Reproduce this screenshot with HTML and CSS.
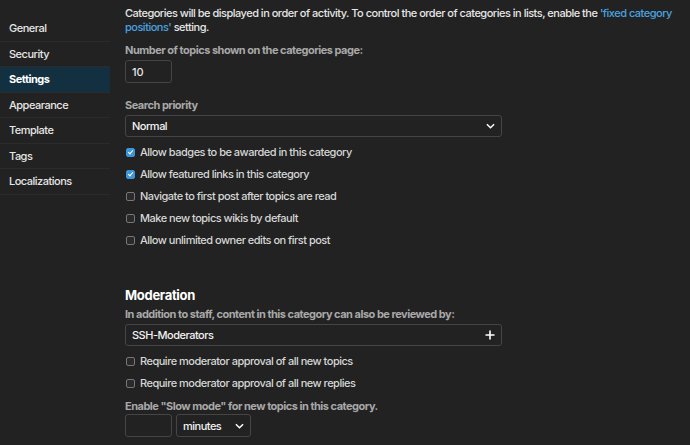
FILE: index.html
```html
<!DOCTYPE html>
<html lang="en">
<head>
  <meta charset="UTF-8" />
  <title>Category Settings</title>
  <link rel="stylesheet" href="styles.css">
</head>
<body>
  <div class="page">
    <ul class="nav">
      <li>General</li>
      <li>Security</li>
      <li class="active">Settings</li>
      <li>Appearance</li>
      <li>Template</li>
      <li>Tags</li>
      <li>Localizations</li>
    </ul>

    <div class="main">
      <p class="intro">Categories will be displayed in order of activity. To control the order of categories in lists, enable the <a href="#">'fixed category positions'</a> setting.</p>

      <div class="field">
        <label class="label">Number of topics shown on the categories page:</label>
        <input class="input small" type="text" value="10">
      </div>

      <div class="field spaced">
        <label class="label">Search priority</label>
        <div class="select wide">
          <span>Normal</span>
          <svg class="chevron" viewBox="0 0 10 6"><path d="M1 1l4 4 4-4" /></svg>
        </div>
      </div>

      <div class="checks">
        <label class="check"><span class="box on"></span>Allow badges to be awarded in this category</label>
        <label class="check"><span class="box on"></span>Allow featured links in this category</label>
        <label class="check"><span class="box"></span>Navigate to first post after topics are read</label>
        <label class="check"><span class="box"></span>Make new topics wikis by default</label>
        <label class="check"><span class="box"></span>Allow unlimited owner edits on first post</label>
      </div>

      <h3 class="section">Moderation</h3>
      <div class="field">
        <label class="label">In addition to staff, content in this category can also be reviewed by:</label>
        <div class="select wide">
          <span>SSH-Moderators</span>
          <svg class="plus" viewBox="0 0 10 10"><path d="M5 0.5v9M0.5 5h9" /></svg>
        </div>
      </div>

      <div class="checks last">
        <label class="check"><span class="box"></span>Require moderator approval of all new topics</label>
        <label class="check"><span class="box"></span>Require moderator approval of all new replies</label>
      </div>

      <div class="field">
        <label class="label tight">Enable "Slow mode" for new topics in this category.</label>
        <div class="row">
          <input class="input small" type="text" value="">
          <div class="select unit">
            <span>minutes</span>
            <svg class="chevron" viewBox="0 0 10 6"><path d="M1 1l4 4 4-4" /></svg>
          </div>
        </div>
      </div>
    </div>
  </div>
</body>
</html>
```

FILE: styles.css
```css
body {
  font-family: Inter, "Noto Sans", sans-serif;
  background: #222222;
  color: #e6e6e6;
  margin: 0;
  padding: 0;
  font-size: 11px;
  font-weight: 500;
  letter-spacing: -0.5px;
}
.page {
  display: flex;
  align-items: flex-start;
}
.nav {
  list-style: none;
  margin: 0;
  padding: 16px 0 0;
  width: 110px;
  flex-shrink: 0;
}
.nav li {
  height: 24.5px;
  line-height: 24.5px;
  padding-left: 9px;
  border-bottom: 1px solid #2b2b2b;
  color: #e6e6e6;
}
.nav li.active {
  background: #12303f;
  color: #ffffff;
  font-weight: 700;
}
.main {
  padding: 6px 12px 0 15px;
  flex: 1;
}
.intro {
  margin: 0 0 9px;
  line-height: 14px;
}
.intro a {
  color: #4aa3e0;
  text-decoration: none;
}
.field {
  margin-bottom: 4px;
}
.field.spaced {
  margin-top: 15px;
}
.label {
  display: block;
  font-weight: 700;
  color: #a8a8a8;
  line-height: 14px;
  margin-bottom: 3px;
}
.label.tight {
  margin-bottom: 1px;
}
.input {
  box-sizing: border-box;
  height: 23px;
  background: #222222;
  border: 1px solid #454545;
  border-radius: 3px;
  color: #e6e6e6;
  font: inherit;
  padding: 0 6px;
  outline: none;
}
.input.small {
  width: 47px;
}
.select {
  box-sizing: border-box;
  height: 22px;
  border: 1px solid #454545;
  border-radius: 3px;
  display: flex;
  align-items: center;
  justify-content: space-between;
  padding: 0 6px;
  color: #f2f2f2;
}
.select.wide {
  width: 377px;
}
.select.unit {
  width: 75px;
  height: 23px;
  padding-left: 6px;
}
.chevron {
  width: 9px;
  height: 6px;
  fill: none;
  stroke: #ffffff;
  stroke-width: 1.6;
}
.plus {
  width: 10px;
  height: 10px;
  stroke: #ffffff;
  stroke-width: 1.6;
}
.row {
  display: flex;
  gap: 4px;
}
.checks {
  display: flex;
  flex-direction: column;
}
.checks.last {
  margin: 1px 0 5px;
}
.check {
  display: flex;
  align-items: center;
  height: 22px;
  color: #d6d6d6;
}
.box {
  box-sizing: border-box;
  width: 9px;
  height: 9px;
  margin: 0 5px 0 1px;
  border: 1px solid #777777;
  border-radius: 2px;
  background: #2a2a2a;
}
.box.on {
  border-color: #3b95d6;
  background: #3b95d6;
  position: relative;
}
.box.on::after {
  content: "";
  position: absolute;
  left: 2px;
  top: 0px;
  width: 2px;
  height: 4px;
  border: solid #ffffff;
  border-width: 0 1.5px 1.5px 0;
  transform: rotate(40deg);
}
.section {
  margin: 36px 0 4px;
  font-size: 13px;
  font-weight: 700;
  color: #ffffff;
  line-height: 16px;
  letter-spacing: -0.3px;
}
```
